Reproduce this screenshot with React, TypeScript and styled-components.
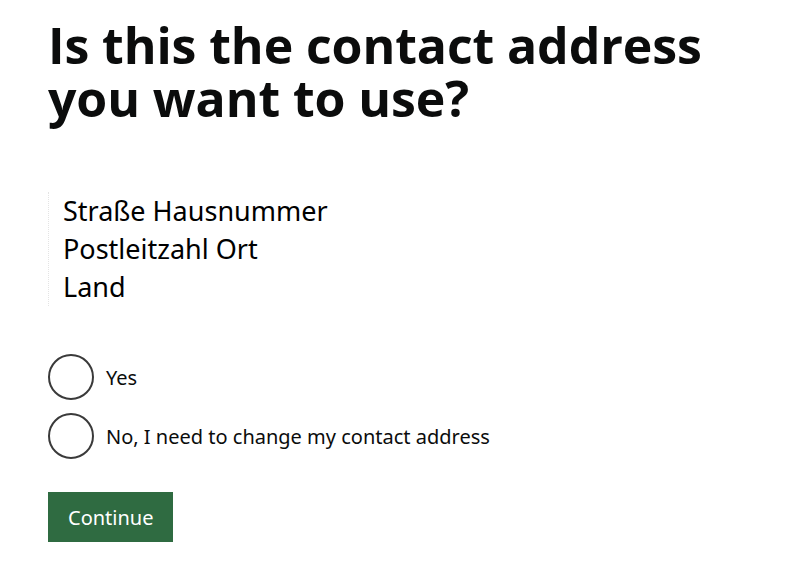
import React, { useState } from 'react';
import styled, { createGlobalStyle } from 'styled-components';

const GlobalStyle = createGlobalStyle`
  html, body {
    margin: 0;
    padding: 0;
    background: #ffffff;
  }
  body {
    font-family: "Open Sans", Arial, sans-serif;
    color: #0b0c0c;
  }
`;

const Page = styled.main`
  padding: 19px 0 0 48px;
  width: 756px;
`;

const Heading = styled.h1`
  margin: 0;
  font-family: "Open Sans", Arial, sans-serif;
  font-weight: 700;
  font-size: 50px;
  line-height: 53px;
  letter-spacing: -0.1px;
  color: #0b0c0c;
`;

const Address = styled.div`
  margin-top: 67px;
  padding-left: 14px;
  border-left: 1px dotted #e4e4e4;
  font-family: "Noto Sans", "Open Sans", sans-serif;
  font-size: 27px;
  line-height: 38px;
  color: #000;
`;

const Radios = styled.fieldset`
  margin: 48px 0 0;
  padding: 0;
  border: none;
  display: flex;
  flex-direction: column;
  gap: 13px;
`;

const RadioItem = styled.label`
  display: flex;
  align-items: center;
  gap: 12px;
  cursor: pointer;
  font-family: "Noto Sans", "Open Sans", sans-serif;
  font-size: 20px;
  color: #0b0c0c;
`;

const Circle = styled.span<{ checked: boolean }>`
  box-sizing: border-box;
  width: 46px;
  height: 46px;
  border-radius: 50%;
  border: 2px solid #3a3a3a;
  display: flex;
  align-items: center;
  justify-content: center;
  flex-shrink: 0;

  &::after {
    content: '';
    width: 20px;
    height: 20px;
    border-radius: 50%;
    background: #0b0c0c;
    display: ${props => (props.checked ? 'block' : 'none')};
  }
`;

const HiddenInput = styled.input`
  position: absolute;
  opacity: 0;
  width: 0;
  height: 0;
`;

const Button = styled.button`
  margin-top: 33px;
  background: #2f6b41;
  color: #ffffff;
  border: none;
  box-shadow: 0 2px 0 #1a3d24;
  padding: 0 20px;
  height: 50px;
  font-family: "Noto Sans", "Open Sans", sans-serif;
  font-size: 20px;
  cursor: pointer;
`;

const options = ['Yes', 'No, I need to change my contact address'];

export default function App() {
  const [choice, setChoice] = useState<string | null>(null);

  return (
    <>
      <GlobalStyle />
      <Page>
        <Heading>
          Is this the contact address
          <br />
          you want to use?
        </Heading>
        <Address>
          Straße Hausnummer
          <br />
          Postleitzahl Ort
          <br />
          Land
        </Address>
        <Radios>
          {options.map(opt => (
            <RadioItem key={opt}>
              <HiddenInput
                type="radio"
                name="contact-address"
                checked={choice === opt}
                onChange={() => setChoice(opt)}
              />
              <Circle checked={choice === opt} />
              {opt}
            </RadioItem>
          ))}
        </Radios>
        <Button type="button">Continue</Button>
      </Page>
    </>
  );
}
